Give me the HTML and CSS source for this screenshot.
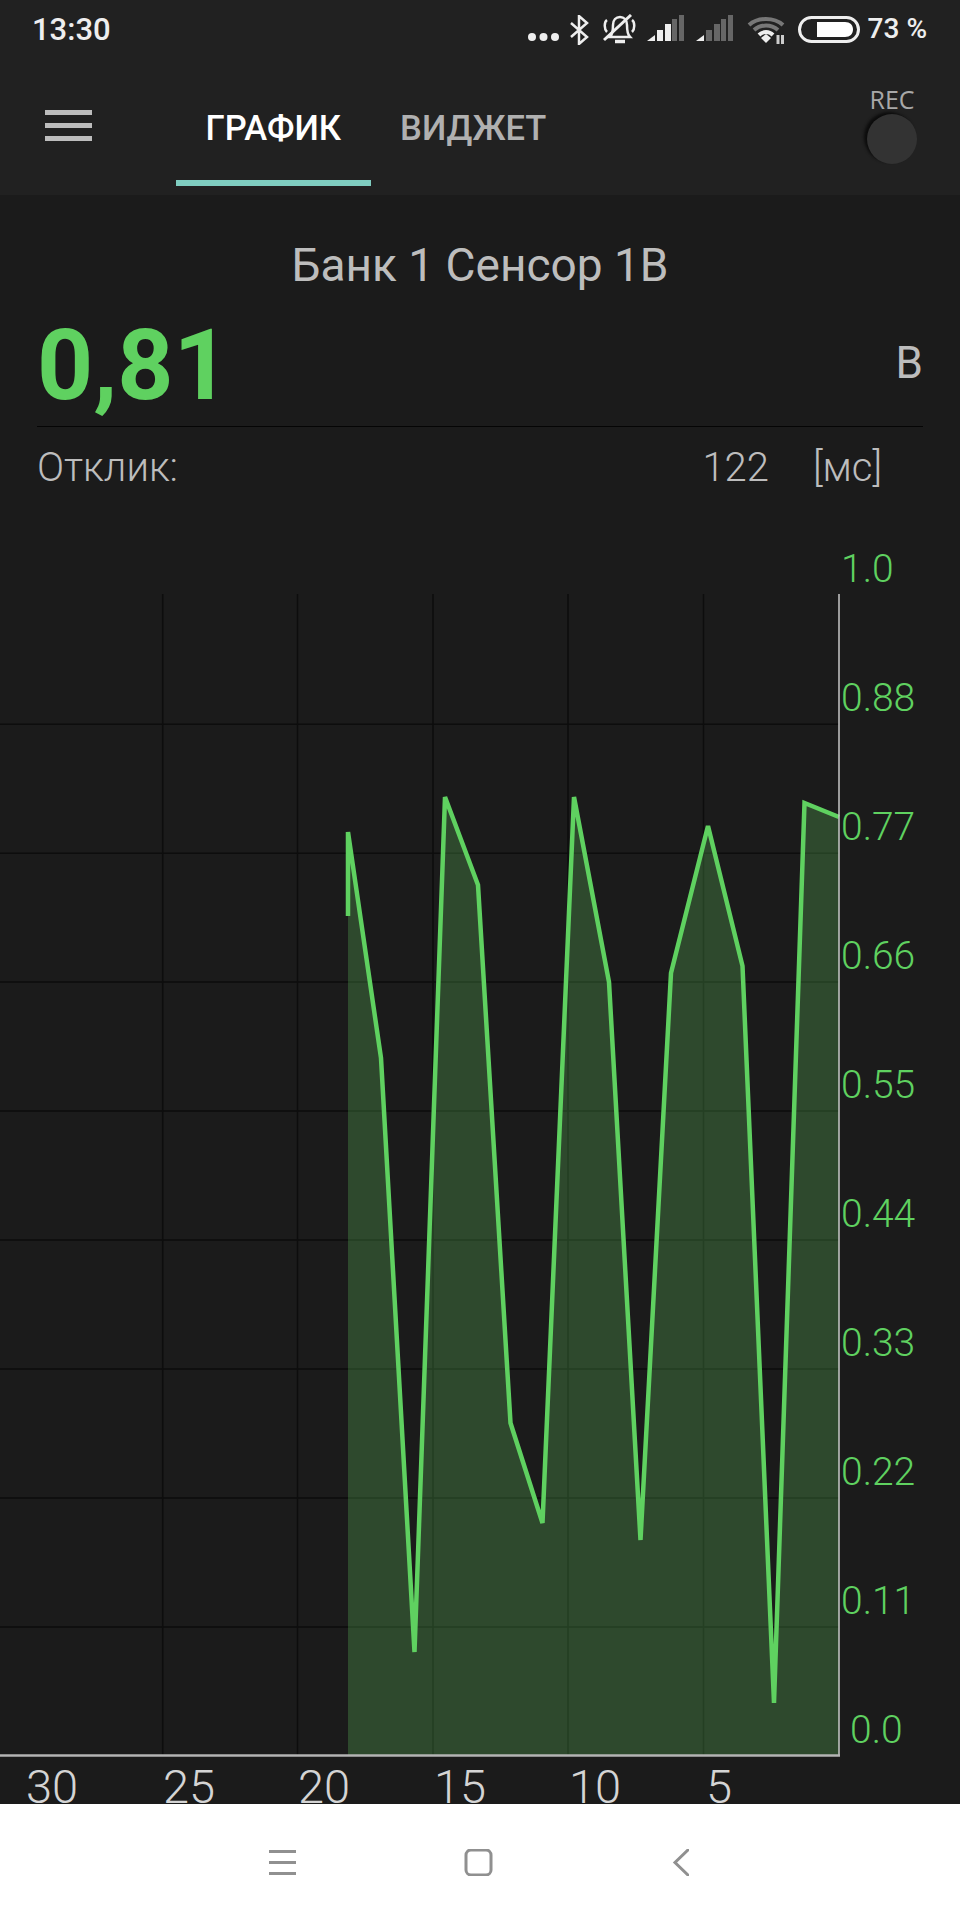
FILE: index.html
```html
<!DOCTYPE html>
<html lang="ru">
<head>
  <meta charset="UTF-8" />
  <meta name="viewport" content="width=device-width, initial-scale=1.0"/>
  <title>График</title>

  <link rel="stylesheet" href="styles.css">
</head>

<body>
  <div class="status-bar">
    <span class="time">13:30</span>
    <div class="status-icons">
      <svg class="icon-dots" width="32" height="10" viewBox="0 0 32 10"><circle cx="4" cy="5" r="4"/><circle cx="15.5" cy="5" r="4"/><circle cx="27" cy="5" r="4"/></svg>
      <svg class="icon-line" width="20" height="30" viewBox="0 0 20 30"><path d="M2 8 18 22 10 29V1L18 8 2 22"/></svg>
      <svg class="icon-mute" width="34" height="30" viewBox="0 0 34 30">
        <path d="M8 23C11 20 11 16 11 11 11 6 14 3 18 3 22 3 25 6 25 11 25 16 25 20 28 23Z"/>
        <path class="base" d="M13 27.500H23"/>
        <path d="M5 6C2 8 2 15 5 18M30 6C33 8 33 15 30 18"/>
        <path class="slash" d="M2 26 29 1"/>
      </svg>
      <svg class="icon-signal first" width="37" height="26" viewBox="0 0 37 26">
        <path d="M0 26 8 20V26Z"/><rect x="10" y="15" width="6" height="11"/><rect x="18" y="9" width="6" height="17"/>
        <rect class="off" x="25" y="4" width="5" height="22"/><rect class="off" x="32" y="0" width="5" height="26"/>
      </svg>
      <svg class="icon-signal second" width="37" height="26" viewBox="0 0 37 26">
        <path d="M0 26 8 20V26Z"/><rect class="off" x="10" y="15" width="6" height="11"/><rect class="off" x="18" y="9" width="6" height="17"/>
        <rect class="off" x="25" y="4" width="5" height="22"/><rect class="off" x="32" y="0" width="5" height="26"/>
      </svg>
      <svg class="icon-wifi" width="38" height="28" viewBox="0 0 38 28">
        <path class="off" d="M2 9C11 1 27 1 36 9"/>
        <path class="off" d="M7 14C14 8 24 8 31 14"/>
        <path d="M12 19C16 15 22 15 26 19"/>
        <path class="fill" d="M14 22 19 18 24 22 19 27Z"/>
        <path class="arrows" d="M31 19V28M35.500 19V28"/>
      </svg>
      <svg class="icon-battery" width="62" height="27" viewBox="0 0 62 27">
        <rect class="shell" x="1.500" y="1.500" width="59" height="24" rx="12"/>
        <path class="level" d="M19 6H47C52 6 55 9 55 13.500 55 18 52 21 47 21H19Z"/>
      </svg>
      <span class="percent">73 %</span>
    </div>
  </div>

  <div class="toolbar">
    <div class="menu-btn">
      <span></span>
      <span></span>
      <span></span>
    </div>
    <div class="tabs">
      <div class="tab active">ГРАФИК</div>
      <div class="tab">ВИДЖЕТ</div>
    </div>
    <div class="rec">
      <span class="rec-label">REC</span>
      <span class="rec-btn"></span>
    </div>
  </div>

  <div class="content">
    <h1 class="sensor-title">Банк 1 Сенсор 1В</h1>
    <div class="value-row">
      <span class="value">0,81</span>
      <span class="unit">В</span>
    </div>
    <div class="response-row">
      <span>Отклик:</span>
      <span class="response-value">122</span>
      <span class="response-unit">[мс]</span>
    </div>
  </div>

  <svg class="chart" width="960" height="1264" viewBox="0 540 960 1264">
    <g class="grid">
      <path d="M0 724.300H839M0 853.200H839M0 982.100H839M0 1111H839M0 1240H839M0 1369H839M0 1498H839M0 1627H839"/>
      <path d="M162.700 594V1755M297.500 594V1755M433 594V1755M568 594V1755M703.500 594V1755"/>
    </g>
    <path class="area" d="M348 1755V832L381 1058 414.500 1652 445 797 478 885 510.500 1423 542.500 1523 574 797 609 982 640.500 1540 671 973 708 826 742.500 966 774 1703 804.500 803 839 817V1755Z"/>
    <path class="data" d="M348 916V832L381 1058 414.500 1652 445 797 478 885 510.500 1423 542.500 1523 574 797 609 982 640.500 1540 671 973 708 826 742.500 966 774 1703 804.500 803 839 817"/>
    <path class="axis-y" d="M839 594V1756"/>
    <path class="axis-x" d="M0 1755.500H840"/>
    <g class="y-labels">
      <text x="841" y="582">1.0</text>
      <text x="841" y="711">0.88</text>
      <text x="841" y="840">0.77</text>
      <text x="841" y="969">0.66</text>
      <text x="841" y="1098">0.55</text>
      <text x="841" y="1227">0.44</text>
      <text x="841" y="1356">0.33</text>
      <text x="841" y="1485">0.22</text>
      <text x="841" y="1614">0.11</text>
      <text x="850" y="1743">0.0</text>
    </g>
    <g class="x-labels">
      <text x="26" y="1803">30</text>
      <text x="163" y="1803">25</text>
      <text x="298" y="1803">20</text>
      <text x="434" y="1803">15</text>
      <text x="569" y="1803">10</text>
      <text x="706" y="1803">5</text>
    </g>
  </svg>

  <div class="nav-bar">
    <svg width="420" height="27" viewBox="0 0 420 27">
      <path d="M0 2.500H27M0 13.500H27M0 24.500H27"/>
      <rect x="197" y="1" width="25" height="25" rx="5"/>
      <path d="M420 0 406 13.500 420 27"/>
    </svg>
  </div>
</body>
</html>
```

FILE: styles.css
```css
body {
  font-family: Roboto, "Liberation Sans", sans-serif;
  margin: 0;
  width: 960px;
  height: 1920px;
  overflow: hidden;
  background-color: #1b1b1b;
  color: #bdbdbd;
}

.status-bar {
  height: 60px;
  box-sizing: border-box;
  padding: 14px 33px 0 32px;
  display: flex;
  justify-content: space-between;
  align-items: flex-start;
  background-color: #212121;
}

.time {
  font-size: 31px;
  font-weight: 500;
  line-height: 31px;
  color: #eee;
}

.status-icons {
  display: flex;
  align-items: flex-end;
  height: 30px;
}

.status-icons svg {
  margin-right: 13px;
  flex: none;
}

.status-icons .icon-dots {
  fill: #eee;
  margin: 0 9px 2px 0;
}

.status-icons .icon-line {
  fill: none;
  stroke: #eee;
  stroke-width: 2.5;
  margin-bottom: -1px;
}

.status-icons .icon-mute {
  fill: none;
  stroke: #eee;
  stroke-width: 2.5;
  margin-right: 11px;
}

.icon-mute .base {
  stroke-width: 3.5;
}

.icon-mute .slash {
  stroke-width: 3;
}

.status-icons .icon-signal {
  fill: #eee;
  margin-bottom: 3px;
}

.status-icons .icon-signal.first {
  margin-right: 12px;
}

.status-icons .icon-signal.second {
  margin-right: 14px;
}

.icon-signal .off {
  fill: #666;
}

.status-icons .icon-wifi {
  fill: none;
  stroke: #eee;
  stroke-width: 4;
}

.icon-wifi .off {
  stroke: #777;
}

.icon-wifi .fill {
  fill: #eee;
  stroke: none;
}

.icon-wifi .arrows {
  stroke: #ccc;
  stroke-width: 3;
}

.status-icons .icon-battery {
  margin: 0 8px 1px 0;
}

.icon-battery .shell {
  fill: none;
  stroke: #eee;
  stroke-width: 3;
}

.icon-battery .level {
  fill: #fff;
}

.percent {
  font-size: 28px;
  font-weight: 500;
  line-height: 30px;
  color: #eee;
}

.toolbar {
  height: 135px;
  display: flex;
  background-color: #212121;
}

.menu-btn {
  width: 47px;
  margin: 50px 0 0 45px;
  display: flex;
  flex-direction: column;
  gap: 8px;
}

.menu-btn span {
  height: 5px;
  background-color: #bdbdbd;
}

.tabs {
  display: flex;
  margin-left: 84px;
}

.tab {
  height: 126px;
  box-sizing: border-box;
  padding: 47px 29.5px 0;
  font-size: 34.5px;
  font-weight: 500;
  line-height: 42px;
  color: #b0b0b0;
}

.tab.active {
  color: #fff;
  border-bottom: 6px solid #7fcdc0;
}

.rec {
  margin-left: auto;
  margin-right: 43px;
  display: flex;
  flex-direction: column;
  align-items: center;
  padding-top: 24px;
}

.rec-label {
  font-family: "Open Sans", sans-serif;
  font-size: 25px;
  line-height: 30px;
  color: #a8a8a8;
}

.rec-btn {
  width: 50px;
  height: 50px;
  margin-top: 0;
  border-radius: 50%;
  background-color: #333;
  box-shadow: -3px -2px 3px #0c0c0c;
}

.content {
  height: 345px;
  box-sizing: border-box;
  padding: 0 37px;
}

.sensor-title {
  margin: 0;
  padding-top: 44px;
  text-align: center;
  font-size: 46px;
  font-weight: 400;
  line-height: 52px;
  color: #bdbdbd;
}

.value-row {
  height: 136px;
  box-sizing: border-box;
  display: flex;
  justify-content: space-between;
  border-bottom: 1px solid #050505;
}

.value {
  font-size: 98px;
  font-weight: 700;
  line-height: 117px;
  margin-top: 16px;
  color: #5fd160;
}

.unit {
  font-size: 44px;
  line-height: 50px;
  margin-top: 47px;
  color: #bdbdbd;
}

.response-row {
  display: flex;
  padding-top: 19px;
  font-size: 40px;
  font-weight: 300;
  line-height: 44px;
}

.response-value {
  margin-left: auto;
}

.response-unit {
  margin-left: 44px;
  margin-right: 41px;
}

.chart {
  display: block;
  overflow: visible;
}

.grid path {
  fill: none;
  stroke: #0d0d0d;
  stroke-width: 1.5;
}

.area {
  fill: rgba(101, 200, 97, 0.27);
}

.data {
  fill: none;
  stroke: #5fd160;
  stroke-width: 4.5;
  stroke-linejoin: miter;
}

.axis-y {
  stroke: #c8c8c8;
  stroke-width: 1.5;
}

.axis-x {
  stroke: #b4b4b4;
  stroke-width: 2.5;
}

.y-labels text {
  font-size: 39px;
  font-weight: 300;
  fill: #5fd160;
}

.x-labels text {
  font-size: 47px;
  font-weight: 300;
  fill: #d4d4d4;
}

.nav-bar {
  height: 116px;
  box-sizing: border-box;
  padding: 45px 0 0 269px;
  background-color: #fff;
}

.nav-bar svg {
  display: block;
  fill: none;
  stroke: #909090;
  stroke-width: 3;
}
```
